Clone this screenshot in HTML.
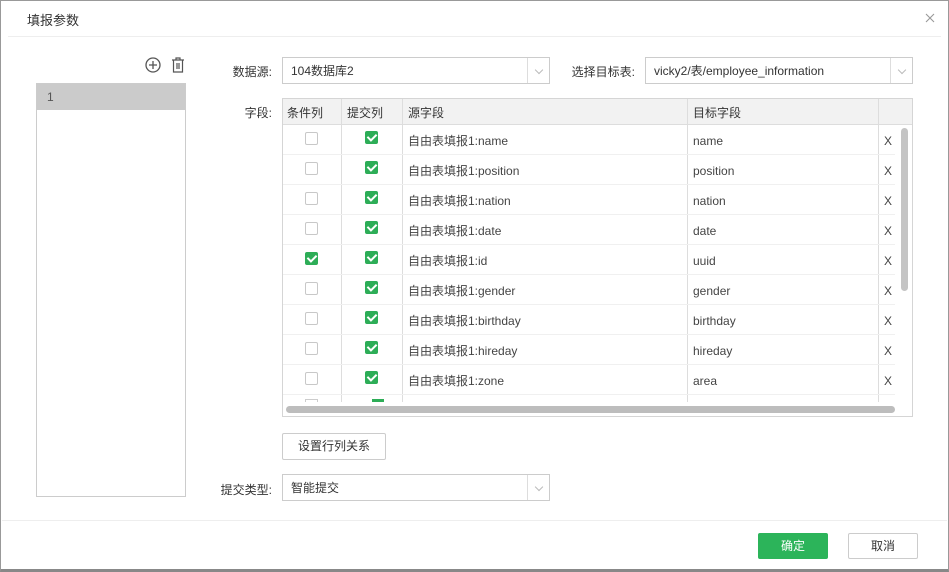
<!DOCTYPE html>
<html><head><meta charset="utf-8"><style>
*{box-sizing:border-box;margin:0;padding:0}
body{width:949px;height:572px;background:#fff;font-family:"Liberation Sans","Noto Sans CJK SC",sans-serif;font-size:12px;color:#333;position:relative;overflow:hidden}
.a{position:absolute}
.frame{left:0;top:0;width:949px;height:572px;border:1px solid #999;border-bottom:3px solid #888}
.sel{border:1px solid #ccc;background:#fff;height:27px;line-height:27px;padding-left:8px;font-size:12px;color:#333}
.sel .arr{position:absolute;right:0;top:0;width:22px;height:25px;border-left:1px solid #ddd}
.sel .arr:after{content:"";position:absolute;left:8px;top:9px;width:5px;height:5px;border:solid #bbb;border-width:0 1px 1px 0;transform:rotate(45deg)}
.lbl{font-size:12px;color:#333;text-align:right}
.cb{position:absolute;width:13px;height:13px;border:1px solid #c8c8c8;border-radius:2px;background:#fff}
.cb.on{background:#2dad57;border-color:#2dad57}
.cb.on:after{content:"";position:absolute;left:3px;top:0px;width:4px;height:7px;border:solid #fff;border-width:0 2px 2px 0;transform:rotate(45deg)}
.row{position:absolute;left:283px;width:612px;height:30px;border-bottom:1px solid #f0f0f0}
.cell{position:absolute;top:1px;line-height:30px;font-size:12px;color:#444}
</style></head><body>
<div class="a frame"></div>
<div class="a" style="left:27px;top:10px;font-size:13px;color:#333">填报参数</div>
<svg class="a" style="left:925px;top:13px" width="10" height="10" viewBox="0 0 10 10"><path d="M1 1l8 8M9 1l-8 8" stroke="#999" stroke-width="1.1"/></svg>
<div class="a" style="left:8px;top:36px;width:933px;height:1px;background:#eee"></div>

<svg class="a" style="left:144px;top:56px" width="18" height="18" viewBox="0 0 18 18"><circle cx="9" cy="9" r="7" fill="none" stroke="#555" stroke-width="1.3"/><path d="M9 5v8M5 9h8" stroke="#555" stroke-width="1.3"/></svg>
<svg class="a" style="left:170px;top:56px" width="16" height="18" viewBox="0 0 16 18"><path d="M2 4h12M6 4V2h4v2M3.5 4v12h9V4M7 7v6M9 7v6" fill="none" stroke="#555" stroke-width="1.2"/></svg>

<div class="a" style="left:36px;top:83px;width:150px;height:414px;border:1px solid #ccc"></div>
<div class="a" style="left:37px;top:84px;width:148px;height:26px;background:#cbcbcb;line-height:26px;padding-left:10px;color:#555">1</div>

<div class="a lbl" style="left:220px;top:63px;width:52px">数据源:</div>
<div class="a sel" style="left:282px;top:57px;width:268px">104数据库2<span class="arr"></span></div>
<div class="a lbl" style="left:565px;top:63px;width:70px">选择目标表:</div>
<div class="a sel" style="left:645px;top:57px;width:268px">vicky2/表/employee_information<span class="arr"></span></div>

<div class="a lbl" style="left:230px;top:104px;width:42px">字段:</div>
<div class="a" style="left:282px;top:98px;width:631px;height:319px;border:1px solid #d5d5d5;overflow:hidden">
</div>
<div class="a" style="left:283px;top:99px;width:629px;height:26px;background:#f2f2f2;border-bottom:1px solid #ddd"></div>
<div class="a" style="left:287px;top:104px;color:#333">条件列</div>
<div class="a" style="left:347px;top:104px;color:#333">提交列</div>
<div class="a" style="left:408px;top:104px;color:#333">源字段</div>
<div class="a" style="left:693px;top:104px;color:#333">目标字段</div>
<div class="a" style="left:341px;top:99px;width:1px;height:303px;background:#ddd"></div>
<div class="a" style="left:402px;top:99px;width:1px;height:303px;background:#ddd"></div>
<div class="a" style="left:687px;top:99px;width:1px;height:303px;background:#ddd"></div>
<div class="a" style="left:878px;top:99px;width:1px;height:303px;background:#ddd"></div>

<div class="row" style="top:125px"><div class="cb" style="left:22px;top:7px"></div><div class="cb on" style="left:82px;top:6px"></div><div class="cell" style="left:125px">自由表填报1:name</div><div class="cell" style="left:410px">name</div><div class="cell" style="left:601px">X</div></div>
<div class="row" style="top:155px"><div class="cb" style="left:22px;top:7px"></div><div class="cb on" style="left:82px;top:6px"></div><div class="cell" style="left:125px">自由表填报1:position</div><div class="cell" style="left:410px">position</div><div class="cell" style="left:601px">X</div></div>
<div class="row" style="top:185px"><div class="cb" style="left:22px;top:7px"></div><div class="cb on" style="left:82px;top:6px"></div><div class="cell" style="left:125px">自由表填报1:nation</div><div class="cell" style="left:410px">nation</div><div class="cell" style="left:601px">X</div></div>
<div class="row" style="top:215px"><div class="cb" style="left:22px;top:7px"></div><div class="cb on" style="left:82px;top:6px"></div><div class="cell" style="left:125px">自由表填报1:date</div><div class="cell" style="left:410px">date</div><div class="cell" style="left:601px">X</div></div>
<div class="row" style="top:245px"><div class="cb on" style="left:22px;top:7px"></div><div class="cb on" style="left:82px;top:6px"></div><div class="cell" style="left:125px">自由表填报1:id</div><div class="cell" style="left:410px">uuid</div><div class="cell" style="left:601px">X</div></div>
<div class="row" style="top:275px"><div class="cb" style="left:22px;top:7px"></div><div class="cb on" style="left:82px;top:6px"></div><div class="cell" style="left:125px">自由表填报1:gender</div><div class="cell" style="left:410px">gender</div><div class="cell" style="left:601px">X</div></div>
<div class="row" style="top:305px"><div class="cb" style="left:22px;top:7px"></div><div class="cb on" style="left:82px;top:6px"></div><div class="cell" style="left:125px">自由表填报1:birthday</div><div class="cell" style="left:410px">birthday</div><div class="cell" style="left:601px">X</div></div>
<div class="row" style="top:335px"><div class="cb" style="left:22px;top:7px"></div><div class="cb on" style="left:82px;top:6px"></div><div class="cell" style="left:125px">自由表填报1:hireday</div><div class="cell" style="left:410px">hireday</div><div class="cell" style="left:601px">X</div></div>
<div class="row" style="top:365px"><div class="cb" style="left:22px;top:7px"></div><div class="cb on" style="left:82px;top:6px"></div><div class="cell" style="left:125px">自由表填报1:zone</div><div class="cell" style="left:410px">area</div><div class="cell" style="left:601px">X</div></div>
<div class="a" style="left:372px;top:399px;width:12px;height:3px;background:#2dad57"></div>
<div class="a" style="left:305px;top:399px;width:13px;height:3px;border:1px solid #ccc;border-bottom:none"></div>
<div class="a" style="left:283px;top:402px;width:612px;height:14px;background:#fff"></div>
<div class="a" style="left:286px;top:406px;width:609px;height:7px;background:#bdbdbd;border-radius:4px"></div>
<div class="a" style="left:901px;top:128px;width:7px;height:163px;background:#c4c4c4;border-radius:4px"></div>

<div class="a" style="left:282px;top:433px;width:104px;height:27px;border:1px solid #ccc;border-radius:2px;text-align:center;line-height:25px;color:#333">设置行列关系</div>

<div class="a lbl" style="left:210px;top:481px;width:62px">提交类型:</div>
<div class="a sel" style="left:282px;top:474px;width:268px">智能提交<span class="arr"></span></div>

<div class="a" style="left:2px;top:520px;width:945px;height:1px;background:#eee"></div>
<div class="a" style="left:758px;top:533px;width:70px;height:26px;background:#2cb45a;border-radius:2px;color:#fff;text-align:center;line-height:26px">确定</div>
<div class="a" style="left:848px;top:533px;width:70px;height:26px;border:1px solid #ccc;border-radius:2px;color:#333;text-align:center;line-height:24px">取消</div>
</body></html>
